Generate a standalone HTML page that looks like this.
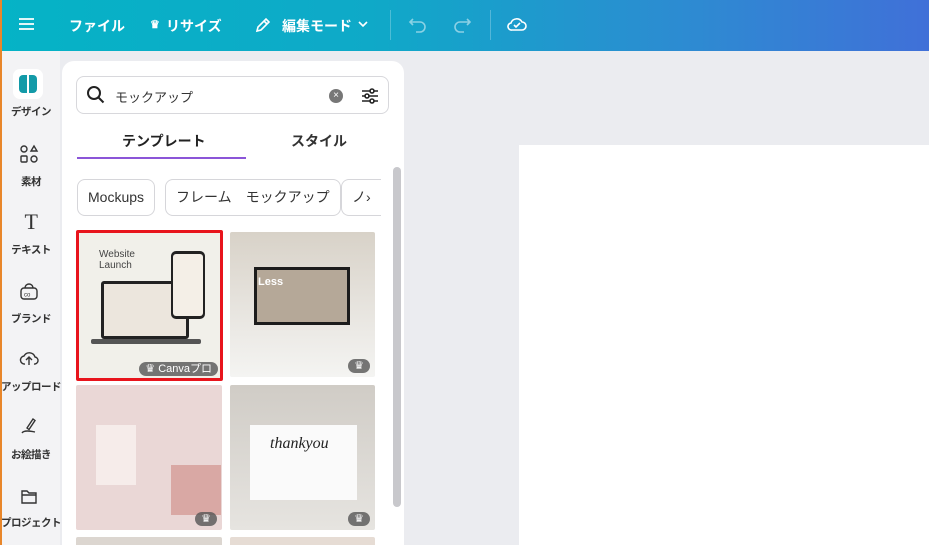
<!DOCTYPE html>
<html><head><meta charset="utf-8"><style>
*{margin:0;padding:0;box-sizing:border-box}
html,body{width:929px;height:545px;overflow:hidden}
body{background:#ebecf0;font-family:"Liberation Sans","Noto Sans CJK JP",sans-serif;position:relative}
.top{position:absolute;left:0;top:0;width:929px;height:51px;background:linear-gradient(90deg,#05b3c6 0%,#0fa9c8 40%,#2e8ad2 75%,#4070d8 100%);color:#fff;font-weight:bold;font-size:14px}
.top span{position:absolute;top:16px;white-space:nowrap}
.orange{position:absolute;left:0;top:0;width:2px;height:545px;background:#e8862a}
.side{position:absolute;left:2px;top:51px;width:58px;height:494px;background:#f3f3f5}
.si{position:absolute;left:-6px;width:70px;text-align:center;font-size:10.5px;color:#333;font-weight:bold;white-space:nowrap;letter-spacing:-0.5px}
.ic{position:absolute;left:17px}
.panel{position:absolute;left:62px;top:61px;width:342px;height:500px;background:#fff;border-radius:12px;overflow:hidden}
.search{position:absolute;left:14px;top:15px;width:313px;height:38px;border:1px solid #d8d8dc;border-radius:8px}
.chip{position:absolute;top:118px;height:37px;border:1px solid #d6d6da;border-radius:8px;font-size:14px;color:#333;line-height:35px;padding:0 10px;white-space:nowrap}
.th{position:absolute;border-radius:2px;overflow:hidden}
.badge{position:absolute;right:5px;bottom:4px;height:14px;background:#555c;border-radius:7px;color:#fff;font-size:11px;line-height:14px;padding:0 6px;white-space:nowrap}
</style></head><body>
<div class="top">
<svg style="position:absolute;left:19px;top:17px" width="15" height="14" stroke="#fff" stroke-width="1.8"><path d="M0 2h15M0 7h15M0 12h15"/></svg>
<span style="left:69px">ファイル</span>
<span style="left:150px;font-size:11px;top:18px">♛</span><span style="left:166px">リサイズ</span>
<svg style="position:absolute;left:254px;top:16px" width="18" height="18" viewBox="0 0 18 18" fill="none" stroke="#fff" stroke-width="1.6"><path d="M3 15l1-4 8-8 3 3-8 8z M10 5l3 3"/></svg>
<span style="left:282px">編集モード</span>
<svg style="position:absolute;left:357px;top:19px" width="12" height="10"><path d="M2 3l4 4 4-4" stroke="#fff" stroke-width="1.6" fill="none"/></svg>
<div style="position:absolute;left:390px;top:10px;width:1px;height:30px;background:#ffffff40"></div>
<svg style="position:absolute;left:408px;top:15px" width="20" height="18" fill="none" stroke="#ffffff80" stroke-width="1.6"><path d="M5 4L2 7l3 3M2 7h10a5 5 0 010 10H8"/></svg>
<svg style="position:absolute;left:452px;top:15px" width="20" height="18" fill="none" stroke="#ffffff80" stroke-width="1.6"><path d="M15 4l3 3-3 3M18 7H8a5 5 0 000 10h4"/></svg>
<div style="position:absolute;left:490px;top:10px;width:1px;height:30px;background:#ffffff40"></div>
<svg style="position:absolute;left:506px;top:14px" width="22" height="20" fill="none" stroke="#fff" stroke-width="1.6"><path d="M6 16h10a4 4 0 000-8 6 6 0 00-11 1 3.5 3.5 0 001 7z M8 11l2 2 4-4"/></svg>
</div>
<div class="orange"></div>
<div class="side">
<div style="position:absolute;left:11px;top:18px;width:30px;height:30px;background:#fff;border-radius:7px"><div style="position:absolute;left:6px;top:6px;width:18px;height:18px;border-radius:4px;background:#139aa8"></div><div style="position:absolute;left:14px;top:6px;width:2px;height:18px;background:#fff"></div></div>
<div class="si" style="top:53px">デザイン</div>
<svg class="ic" style="top:93px" width="20" height="20" fill="none" stroke="#333" stroke-width="1.4"><circle cx="5" cy="5" r="3"/><path d="M15 2l3 5h-6z"/><rect x="2" y="12" width="6" height="6" rx="1"/><circle cx="15" cy="15" r="3"/></svg>
<div class="si" style="top:123px">素材</div>
<div class="si" style="top:158px;font-size:22px;font-weight:normal;font-family:'Liberation Serif',serif">T</div>
<div class="si" style="top:191px">テキスト</div>
<svg class="ic" style="top:230px" width="20" height="20" fill="none" stroke="#333" stroke-width="1.4"><rect x="2" y="7" width="16" height="11" rx="3"/><path d="M6 7a4 4 0 018 0"/><text x="5" y="15.5" font-size="6" fill="#333" stroke="none" font-family="Liberation Sans">co</text></svg>
<div class="si" style="top:260px">ブランド</div>
<svg class="ic" style="top:297px" width="20" height="20" fill="none" stroke="#333" stroke-width="1.4"><path d="M6 16a4 4 0 01-1-8 6 6 0 0111 1 3.5 3.5 0 01-1 7M10 17v-7M7 12l3-3 3 3"/></svg>
<div class="si" style="top:328px">アップロード</div>
<svg class="ic" style="top:365px" width="20" height="20" fill="none" stroke="#333" stroke-width="1.4"><path d="M8 12l6-9 2 1.5-6 9z M3 17c2-3 8-2 13-1"/></svg>
<div class="si" style="top:396px">お絵描き</div>
<svg class="ic" style="top:435px" width="20" height="20" fill="none" stroke="#333" stroke-width="1.4"><path d="M3 5h5l2 2h7v10H3z M3 9h14"/></svg>
<div class="si" style="top:464px">プロジェクト</div>
</div>
<div class="panel">
<div class="search">
<svg style="position:absolute;left:9px;top:8px" width="20" height="20" fill="none" stroke="#222" stroke-width="2"><circle cx="8" cy="8" r="6"/><path d="M12.5 12.5l5 5"/></svg>
<span style="position:absolute;left:38px;top:10px;font-size:13px;color:#333">モックアップ</span>
<div style="position:absolute;left:252px;top:12px;width:14px;height:14px;border-radius:50%;background:#777;color:#fff;font-size:10px;text-align:center;line-height:14px">×</div>
<svg style="position:absolute;left:283px;top:9px" width="20" height="20" fill="none" stroke="#222" stroke-width="1.6"><path d="M2 5h16M2 10h16M2 15h16"/><circle cx="12" cy="5" r="2" fill="#fff"/><circle cx="7" cy="10" r="2" fill="#fff"/><circle cx="12" cy="15" r="2" fill="#fff"/></svg>
</div>
<div style="position:absolute;left:60px;top:70px;font-size:14px;font-weight:bold;color:#222">テンプレート</div>
<div style="position:absolute;left:229px;top:70px;font-size:14px;font-weight:bold;color:#333">スタイル</div>
<div style="position:absolute;left:15px;top:96px;width:169px;height:2px;background:#8b55d8"></div>
<div style="position:absolute;left:331px;top:106px;width:8px;height:340px;background:#c8c8cc;border-radius:4px"></div>
<div class="chip" style="left:15px">Mockups</div>
<div class="chip" style="left:103px">フレーム　モックアップ</div>
<div class="chip" style="left:279px;width:40px;border-right:none;border-radius:8px 0 0 8px;overflow:hidden">ノ›</div>
<div class="th" style="left:14px;top:169px;width:147px;height:151px;border:3px solid #e8141c;background:#f1f0ea">
 <div style="position:absolute;left:20px;top:16px;font-size:10px;color:#444;line-height:11px">Website<br>Launch</div>
 <div style="position:absolute;left:22px;top:48px;width:88px;height:58px;background:#222;border-radius:3px"><div style="position:absolute;left:3px;top:3px;right:3px;bottom:3px;background:#ece6dd"></div></div>
 <div style="position:absolute;left:12px;top:106px;width:110px;height:5px;background:#555;border-radius:2px"></div>
 <div style="position:absolute;left:92px;top:18px;width:34px;height:68px;background:#222;border-radius:5px"><div style="position:absolute;left:2px;top:3px;right:2px;bottom:3px;background:#f4efe7;border-radius:3px"></div></div>
 <div class="badge" style="right:2px;bottom:2px">♛ Canvaプロ</div>
</div>
<div class="th" style="left:168px;top:171px;width:145px;height:145px;background:linear-gradient(#d8d2c8,#eceae6 70%,#f4f4f2)">
 <div style="position:absolute;left:24px;top:35px;width:96px;height:58px;background:#1c1c1c"><div style="position:absolute;left:3px;top:3px;right:3px;bottom:3px;background:#b5a898"></div></div>
 <div style="position:absolute;left:28px;top:44px;font-size:11px;color:#fff;font-weight:bold">Less</div>
 <div class="badge">♛</div>
</div>
<div class="th" style="left:14px;top:324px;width:146px;height:145px;background:#ead7d6"><div style="position:absolute;left:20px;top:40px;width:40px;height:60px;background:#f6ecea"></div><div style="position:absolute;left:95px;top:80px;width:50px;height:50px;background:#d9a8a4"></div><div class="badge">♛</div></div>
<div class="th" style="left:168px;top:324px;width:145px;height:145px;background:linear-gradient(#d0ccc6,#e6e4e0)">
 <div style="position:absolute;left:20px;top:40px;width:107px;height:75px;background:#fafafa"></div>
 <div style="position:absolute;left:40px;top:50px;font-size:16px;font-style:italic;font-family:'Liberation Serif',serif;color:#222">thankyou</div>
 <div class="badge">♛</div>
</div>
<div class="th" style="left:14px;top:476px;width:146px;height:20px;background:#dcd6d0"></div>
<div class="th" style="left:168px;top:476px;width:145px;height:20px;background:#e6dcd4"></div>
</div>
<div style="position:absolute;left:519px;top:145px;width:410px;height:400px;background:#fff"></div>
</body></html>
